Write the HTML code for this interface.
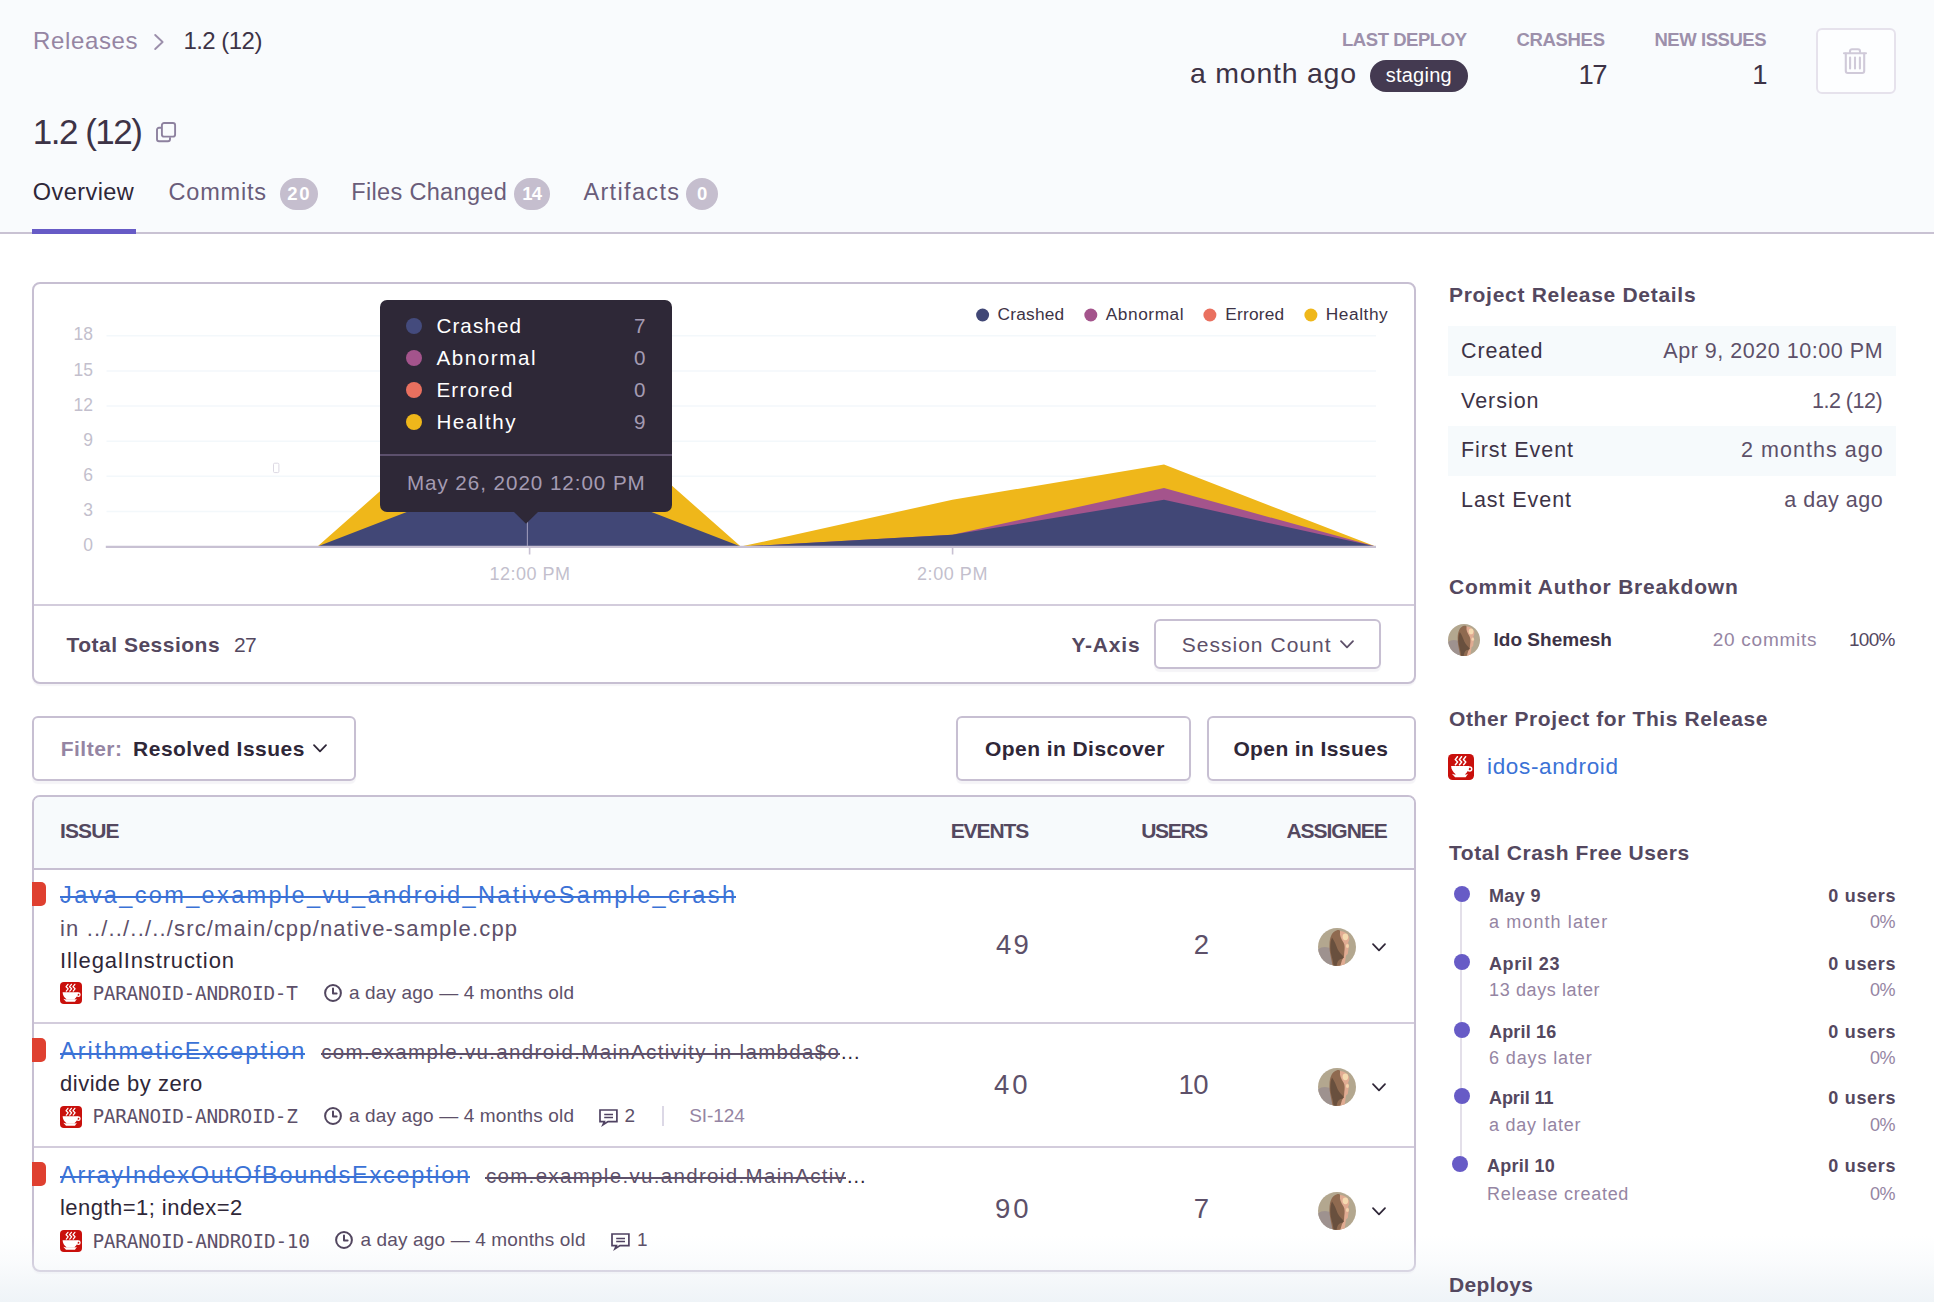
<!DOCTYPE html>
<html lang="en">
<head>
<meta charset="utf-8">
<title>Release 1.2 (12) - Sentry</title>
<style>
html,body{margin:0;padding:0;}
body{width:1934px;height:1302px;position:relative;overflow:hidden;background:#fff;font-family:"Liberation Sans",sans-serif;}
.a{position:absolute;box-sizing:border-box;}
.t{position:absolute;white-space:pre;line-height:1;z-index:5;}
.panel{border:2px solid #c7bfd2;border-radius:8px;background:#fff;box-shadow:0 2px 1px rgba(60,40,90,.05);}
.btn{border:2px solid #c7bfd2;border-radius:6px;background:#fff;box-shadow:0 3px 1px rgba(60,40,90,.05);}
.hl{background:#c7bfd2;height:2px;}
.badge{background:#c5bece;border-radius:16px;height:31.5px;top:178.2px;}
.dot{border-radius:50%;}
.stripe{background:#f6fafc;left:1448px;width:448px;height:50px;}
.tl{width:16px;height:16px;border-radius:50%;background:#675bc6;}
svg{position:absolute;overflow:visible;z-index:2;}
.st{position:absolute;height:2px;z-index:5;}
</style>
</head>
<body>
<!-- header -->
<div class="a" style="left:0;top:0;width:1934px;height:232px;background:#f9fbfd;"></div>
<div class="a" style="left:0;top:232px;width:1934px;height:2px;background:#c9c2d3;"></div>
<div class="a" style="left:32px;top:228.5px;width:104px;height:5.5px;background:#675bc6;"></div>
<svg style="left:154px;top:34px" width="10" height="16" viewBox="0 0 10 16"><path d="M1.2 1 L8.6 8 L1.2 15" fill="none" stroke="#9c8fab" stroke-width="1.9" stroke-linecap="round" stroke-linejoin="round"/></svg>
<div class="a" style="left:1369.8px;top:60.3px;width:98.3px;height:31.6px;border-radius:16px;background:#443a51;"></div>
<div class="a" style="left:1816.3px;top:28px;width:79.6px;height:65.8px;border:2px solid #e6e2ec;border-radius:6px;background:#fdfeff;"></div>
<svg style="left:1843px;top:48px" width="24" height="26" viewBox="0 0 24 26"><g fill="none" stroke="#d0cad9" stroke-width="2.1" stroke-linecap="round" stroke-linejoin="round"><path d="M7 5 V3.2 A2 2 0 0 1 9 1.2 H15 A2 2 0 0 1 17 3.2 V5"/><path d="M1 5.2 H23"/><path d="M2.8 5.5 V23 A2 2 0 0 0 4.8 25 H19.2 A2 2 0 0 0 21.2 23 V5.5"/><path d="M7.1 9.5 V20.5 M12 9.5 V20.5 M16.9 9.5 V20.5"/></g></svg>
<svg style="left:156px;top:121.8px" width="21" height="21" viewBox="0 0 21 21"><g fill="none" stroke="#8d819f" stroke-width="1.9" stroke-linejoin="round"><path d="M5.3 5.8 H3 A2 2 0 0 0 1 7.8 V17.2 A2 2 0 0 0 3 19.2 H12 A2 2 0 0 0 14 17.2 V15.2"/><rect x="5.9" y="1" width="13.2" height="13.6" rx="2.2"/></g></svg>
<div class="a badge" style="left:280.2px;width:37.6px;"></div>
<div class="a badge" style="left:514px;width:36px;"></div>
<div class="a badge" style="left:685.7px;width:32.3px;"></div>

<!-- chart panel -->
<div class="a panel" style="left:32px;top:282px;width:1384px;height:402px;"></div>
<div class="a hl" style="left:34px;top:604px;width:1380px;background:#d3ccdc;"></div>
<svg style="left:34px;top:284px" width="1380" height="320" viewBox="34 284 1380 320">
<g stroke="#f3f8fb" stroke-width="1.5">
<path d="M106.5 335.8H1376M106.5 370.9H1376M106.5 406H1376M106.5 441.2H1376M106.5 476.3H1376M106.5 511.4H1376"/>
</g>
<rect x="273.5" y="463.2" width="5.4" height="9.4" rx="1.2" fill="none" stroke="#dcd8e3" stroke-width="1"/>
<polygon fill="#efb71a" points="317.45,546.6 529.1,359.2 740.75,546.6 952.4,499.7 1164,464.6 1375.7,546.6"/>
<polygon fill="#a4548c" points="740.75,546.6 952.4,534.8 1164,488 1375.7,546.6"/>
<polygon fill="#414776" points="317.45,546.6 529.1,464.6 740.75,546.6 952.4,534.8 1164,499.7 1375.7,546.6"/>
<path d="M105.8 546.9H1376" stroke="#c8c1d3" stroke-width="2.2"/>
<path d="M529.6 548V554.5M952.6 548V554.5" stroke="#c8c1d3" stroke-width="1.6"/>
<path d="M527.4 520V546" stroke="#9a98b8" stroke-width="1.1"/>
<g>
<circle cx="982.6" cy="315" r="6.5" fill="#414776"/>
<circle cx="1090.8" cy="315" r="6.5" fill="#a4548c"/>
<circle cx="1209.9" cy="315" r="6.5" fill="#e9705f"/>
<circle cx="1310.9" cy="315" r="6.5" fill="#efb71a"/>
</g>
</svg>
<!-- tooltip -->
<div class="a" style="left:380px;top:300px;width:291.7px;height:212px;border-radius:7px;background:#2e2837;z-index:3;"></div>
<div class="a" style="left:380px;top:454px;width:291.7px;height:2px;background:#5c506c;z-index:4;"></div>
<svg style="left:514px;top:511.5px;z-index:4" width="24" height="12" viewBox="0 0 24 12"><path d="M0 0H24L12 11.8Z" fill="#2e2837"/></svg>
<div class="a dot" style="left:405.9px;top:318.3px;width:16px;height:16px;background:#444b7d;z-index:4;"></div>
<div class="a dot" style="left:405.9px;top:350.2px;width:16px;height:16px;background:#a4548c;z-index:4;"></div>
<div class="a dot" style="left:405.9px;top:382.3px;width:16px;height:16px;background:#e9705f;z-index:4;"></div>
<div class="a dot" style="left:405.9px;top:414.3px;width:16px;height:16px;background:#efb71a;z-index:4;"></div>
<!-- chart footer -->
<div class="a btn" style="left:1154.4px;top:618.5px;width:227px;height:50.8px;"></div>
<svg style="left:1339.5px;top:640px" width="14" height="9" viewBox="0 0 14 9"><path d="M1 1.2 L7 7.4 L13 1.2" fill="none" stroke="#5d5069" stroke-width="1.8" stroke-linecap="round" stroke-linejoin="round"/></svg>

<!-- filter row -->
<div class="a btn" style="left:32.4px;top:716.2px;width:323.2px;height:64.6px;"></div>
<svg style="left:313.3px;top:743.6px" width="14" height="9" viewBox="0 0 14 9"><path d="M1 1.2 L7 7.4 L13 1.2" fill="none" stroke="#2f2738" stroke-width="1.8" stroke-linecap="round" stroke-linejoin="round"/></svg>
<div class="a btn" style="left:956.3px;top:716.4px;width:234.9px;height:64.4px;"></div>
<div class="a btn" style="left:1206.5px;top:716.4px;width:209px;height:64.4px;"></div>

<!-- table -->
<div class="a panel" style="left:32px;top:794.5px;width:1384px;height:477.5px;overflow:hidden;"><div class="a" style="left:0;top:0;width:1380px;height:72px;background:#f7fafc;"></div></div>
<div class="a hl" style="left:34px;top:868px;width:1380px;"></div>
<div class="a hl" style="left:34px;top:1022px;width:1380px;background:#d3ccdc;"></div>
<div class="a hl" style="left:34px;top:1146px;width:1380px;background:#d3ccdc;"></div>
<div class="a" style="left:32px;top:882.1px;width:14px;height:23.8px;border-radius:0 5px 5px 0;background:#df4030;"></div>
<div class="a" style="left:32px;top:1038.1px;width:14px;height:23.8px;border-radius:0 5px 5px 0;background:#df4030;"></div>
<div class="a" style="left:32px;top:1162.2px;width:14px;height:23.8px;border-radius:0 5px 5px 0;background:#df4030;"></div>
<svg style="left:60px;top:982.2px" width="22" height="22" viewBox="0 0 26 26"><rect width="26" height="26" rx="4.6" fill="#c9100c"/><g fill="none" stroke="#fff" stroke-width="1.45" stroke-linejoin="round" stroke-linecap="round"><path d="M9.4 2.7L7.2 5.6L9.6 8L7.4 10.7M13.5 2.7L11.3 5.6L13.7 8L11.5 10.7M17.6 2.7L15.4 5.6L17.8 8L15.6 10.7"/><circle cx="21.7" cy="15" r="2" stroke-width="1.5"/></g><path d="M3.1 12.1H21.2C21.2 15.6 19.4 18.2 17.4 20V20.9H7.4V20C5.2 18.2 3.1 15.6 3.1 12.1Z" fill="#fff"/><path d="M3.9 19.8L7.2 20.7H17.8L20 19.8L17.7 23.2H7.1Z" fill="#fff"/></svg>
<svg style="left:323.7px;top:984px" width="18" height="18" viewBox="0 0 18 18"><g fill="none" stroke="#52465f" stroke-width="2" stroke-linecap="round" stroke-linejoin="round"><circle cx="9" cy="9" r="7.9"/><path d="M9 4.6V9.6H12.6"/></g></svg>
<svg style="left:60px;top:1105.9px" width="22" height="22" viewBox="0 0 26 26"><rect width="26" height="26" rx="4.6" fill="#c9100c"/><g fill="none" stroke="#fff" stroke-width="1.45" stroke-linejoin="round" stroke-linecap="round"><path d="M9.4 2.7L7.2 5.6L9.6 8L7.4 10.7M13.5 2.7L11.3 5.6L13.7 8L11.5 10.7M17.6 2.7L15.4 5.6L17.8 8L15.6 10.7"/><circle cx="21.7" cy="15" r="2" stroke-width="1.5"/></g><path d="M3.1 12.1H21.2C21.2 15.6 19.4 18.2 17.4 20V20.9H7.4V20C5.2 18.2 3.1 15.6 3.1 12.1Z" fill="#fff"/><path d="M3.9 19.8L7.2 20.7H17.8L20 19.8L17.7 23.2H7.1Z" fill="#fff"/></svg>
<svg style="left:323.7px;top:1107.2px" width="18" height="18" viewBox="0 0 18 18"><g fill="none" stroke="#52465f" stroke-width="2" stroke-linecap="round" stroke-linejoin="round"><circle cx="9" cy="9" r="7.9"/><path d="M9 4.6V9.6H12.6"/></g></svg>
<svg style="left:599.2px;top:1109.2px" width="19" height="17" viewBox="0 0 19 17"><g fill="none" stroke="#4f4262" stroke-width="1.7" stroke-linejoin="miter"><path d="M1 1H17.9V12.6H9L4 15.8L5.4 12.6H1Z"/><path d="M5.2 5.6H14M5.2 8.6H14" stroke-width="1.5"/></g></svg>
<div class="a" style="left:662px;top:1106px;width:2px;height:20px;background:#dcd8e6;"></div>
<svg style="left:60px;top:1230.1px" width="22" height="22" viewBox="0 0 26 26"><rect width="26" height="26" rx="4.6" fill="#c9100c"/><g fill="none" stroke="#fff" stroke-width="1.45" stroke-linejoin="round" stroke-linecap="round"><path d="M9.4 2.7L7.2 5.6L9.6 8L7.4 10.7M13.5 2.7L11.3 5.6L13.7 8L11.5 10.7M17.6 2.7L15.4 5.6L17.8 8L15.6 10.7"/><circle cx="21.7" cy="15" r="2" stroke-width="1.5"/></g><path d="M3.1 12.1H21.2C21.2 15.6 19.4 18.2 17.4 20V20.9H7.4V20C5.2 18.2 3.1 15.6 3.1 12.1Z" fill="#fff"/><path d="M3.9 19.8L7.2 20.7H17.8L20 19.8L17.7 23.2H7.1Z" fill="#fff"/></svg>
<svg style="left:335.4px;top:1231.3px" width="18" height="18" viewBox="0 0 18 18"><g fill="none" stroke="#52465f" stroke-width="2" stroke-linecap="round" stroke-linejoin="round"><circle cx="9" cy="9" r="7.9"/><path d="M9 4.6V9.6H12.6"/></g></svg>
<svg style="left:610.8px;top:1233.3px" width="19" height="17" viewBox="0 0 19 17"><g fill="none" stroke="#4f4262" stroke-width="1.7" stroke-linejoin="miter"><path d="M1 1H17.9V12.6H9L4 15.8L5.4 12.6H1Z"/><path d="M5.2 5.6H14M5.2 8.6H14" stroke-width="1.5"/></g></svg>
<svg style="left:1318px;top:928px" width="38" height="38" viewBox="0 0 38 38"><defs><clipPath id="av1"><circle cx="19" cy="19" r="19"/></clipPath></defs><g clip-path="url(#av1)"><rect width="38" height="38" fill="#b3a78f"/><ellipse cx="7" cy="29" rx="11" ry="10" fill="#96898f" opacity=".7"/><path d="M21 3C25 2.4 29 4.5 31 8.5C32 11.5 30.5 13.5 30 15C31.2 16.5 31.5 18.5 30.5 20.5L29.8 26L28 27.5L26.5 38H20Z" fill="#e0ab92"/><path d="M19 2.2C21 1.8 22.6 2.4 22 4C21.4 7 23 11 25.5 14.5C27 17 26.8 21 26.3 24C26 27 26.5 29.5 24 32L22.3 38H14.5C13.5 30 11 24 11.5 16C11.8 9 14 3.5 19 2.2Z" fill="#8f6a50"/><path d="M14 9.5C16.5 13 18 17 19.5 21C21 24.5 24.5 27 26 29.5L23.5 31C21 31 19.5 33 18.5 38H15.5C15.5 32 12.5 27 12.3 20C12.2 15 13 12 14 9.5Z" fill="#634b3b" opacity=".85"/><ellipse cx="27.4" cy="8.8" rx="2.8" ry="3.4" fill="#f5dab0"/><ellipse cx="29.4" cy="18" rx="1.5" ry="1.9" fill="#f3d3ad"/></g></svg>
<svg style="left:1372px;top:942.8px" width="14" height="9" viewBox="0 0 14 9"><path d="M1 1.2L7 7.4L13 1.2" fill="none" stroke="#2f2738" stroke-width="1.75" stroke-linecap="round" stroke-linejoin="round"/></svg>
<svg style="left:1318px;top:1068px" width="38" height="38" viewBox="0 0 38 38"><defs><clipPath id="av2"><circle cx="19" cy="19" r="19"/></clipPath></defs><g clip-path="url(#av2)"><rect width="38" height="38" fill="#b3a78f"/><ellipse cx="7" cy="29" rx="11" ry="10" fill="#96898f" opacity=".7"/><path d="M21 3C25 2.4 29 4.5 31 8.5C32 11.5 30.5 13.5 30 15C31.2 16.5 31.5 18.5 30.5 20.5L29.8 26L28 27.5L26.5 38H20Z" fill="#e0ab92"/><path d="M19 2.2C21 1.8 22.6 2.4 22 4C21.4 7 23 11 25.5 14.5C27 17 26.8 21 26.3 24C26 27 26.5 29.5 24 32L22.3 38H14.5C13.5 30 11 24 11.5 16C11.8 9 14 3.5 19 2.2Z" fill="#8f6a50"/><path d="M14 9.5C16.5 13 18 17 19.5 21C21 24.5 24.5 27 26 29.5L23.5 31C21 31 19.5 33 18.5 38H15.5C15.5 32 12.5 27 12.3 20C12.2 15 13 12 14 9.5Z" fill="#634b3b" opacity=".85"/><ellipse cx="27.4" cy="8.8" rx="2.8" ry="3.4" fill="#f5dab0"/><ellipse cx="29.4" cy="18" rx="1.5" ry="1.9" fill="#f3d3ad"/></g></svg>
<svg style="left:1372px;top:1082.8px" width="14" height="9" viewBox="0 0 14 9"><path d="M1 1.2L7 7.4L13 1.2" fill="none" stroke="#2f2738" stroke-width="1.75" stroke-linecap="round" stroke-linejoin="round"/></svg>
<svg style="left:1318px;top:1192px" width="38" height="38" viewBox="0 0 38 38"><defs><clipPath id="av3"><circle cx="19" cy="19" r="19"/></clipPath></defs><g clip-path="url(#av3)"><rect width="38" height="38" fill="#b3a78f"/><ellipse cx="7" cy="29" rx="11" ry="10" fill="#96898f" opacity=".7"/><path d="M21 3C25 2.4 29 4.5 31 8.5C32 11.5 30.5 13.5 30 15C31.2 16.5 31.5 18.5 30.5 20.5L29.8 26L28 27.5L26.5 38H20Z" fill="#e0ab92"/><path d="M19 2.2C21 1.8 22.6 2.4 22 4C21.4 7 23 11 25.5 14.5C27 17 26.8 21 26.3 24C26 27 26.5 29.5 24 32L22.3 38H14.5C13.5 30 11 24 11.5 16C11.8 9 14 3.5 19 2.2Z" fill="#8f6a50"/><path d="M14 9.5C16.5 13 18 17 19.5 21C21 24.5 24.5 27 26 29.5L23.5 31C21 31 19.5 33 18.5 38H15.5C15.5 32 12.5 27 12.3 20C12.2 15 13 12 14 9.5Z" fill="#634b3b" opacity=".85"/><ellipse cx="27.4" cy="8.8" rx="2.8" ry="3.4" fill="#f5dab0"/><ellipse cx="29.4" cy="18" rx="1.5" ry="1.9" fill="#f3d3ad"/></g></svg>
<svg style="left:1372px;top:1206.8px" width="14" height="9" viewBox="0 0 14 9"><path d="M1 1.2L7 7.4L13 1.2" fill="none" stroke="#2f2738" stroke-width="1.75" stroke-linecap="round" stroke-linejoin="round"/></svg>
<svg style="left:1448px;top:624px" width="32" height="32" viewBox="0 0 38 38"><defs><clipPath id="av4"><circle cx="19" cy="19" r="19"/></clipPath></defs><g clip-path="url(#av4)"><rect width="38" height="38" fill="#b3a78f"/><ellipse cx="7" cy="29" rx="11" ry="10" fill="#96898f" opacity=".7"/><path d="M21 3C25 2.4 29 4.5 31 8.5C32 11.5 30.5 13.5 30 15C31.2 16.5 31.5 18.5 30.5 20.5L29.8 26L28 27.5L26.5 38H20Z" fill="#e0ab92"/><path d="M19 2.2C21 1.8 22.6 2.4 22 4C21.4 7 23 11 25.5 14.5C27 17 26.8 21 26.3 24C26 27 26.5 29.5 24 32L22.3 38H14.5C13.5 30 11 24 11.5 16C11.8 9 14 3.5 19 2.2Z" fill="#8f6a50"/><path d="M14 9.5C16.5 13 18 17 19.5 21C21 24.5 24.5 27 26 29.5L23.5 31C21 31 19.5 33 18.5 38H15.5C15.5 32 12.5 27 12.3 20C12.2 15 13 12 14 9.5Z" fill="#634b3b" opacity=".85"/><ellipse cx="27.4" cy="8.8" rx="2.8" ry="3.4" fill="#f5dab0"/><ellipse cx="29.4" cy="18" rx="1.5" ry="1.9" fill="#f3d3ad"/></g></svg>
<svg style="left:1448.2px;top:754px" width="26" height="26" viewBox="0 0 26 26"><rect width="26" height="26" rx="4.6" fill="#c9100c"/><g fill="none" stroke="#fff" stroke-width="1.45" stroke-linejoin="round" stroke-linecap="round"><path d="M9.4 2.7L7.2 5.6L9.6 8L7.4 10.7M13.5 2.7L11.3 5.6L13.7 8L11.5 10.7M17.6 2.7L15.4 5.6L17.8 8L15.6 10.7"/><circle cx="21.7" cy="15" r="2" stroke-width="1.5"/></g><path d="M3.1 12.1H21.2C21.2 15.6 19.4 18.2 17.4 20V20.9H7.4V20C5.2 18.2 3.1 15.6 3.1 12.1Z" fill="#fff"/><path d="M3.9 19.8L7.2 20.7H17.8L20 19.8L17.7 23.2H7.1Z" fill="#fff"/></svg>

<!-- sidebar -->
<div class="a stripe" style="top:326px;"></div>
<div class="a stripe" style="top:426px;"></div>
<div class="a" style="left:1460.2px;top:894px;width:2px;height:262px;background:#e3dfe9;"></div>
<div class="a tl" style="left:1454.2px;top:886.1px;"></div>
<div class="a tl" style="left:1454.2px;top:954.1px;"></div>
<div class="a tl" style="left:1454.2px;top:1022.4px;"></div>
<div class="a tl" style="left:1453.9px;top:1088.2px;"></div>
<div class="a tl" style="left:1451.9px;top:1156.2px;"></div>

<!-- bottom fade -->
<div class="a" style="left:0;top:1236px;width:1934px;height:66px;background:linear-gradient(to bottom,rgba(238,243,247,0) 0%,rgba(238,243,247,.3) 40%,rgba(238,243,247,.75) 80%,rgba(238,243,247,.95) 100%);z-index:1;"></div>

<span class="t" style='left:33.00px;top:29.30px;font-size:24px;color:#9585a3;letter-spacing:0.634px;'>Releases</span>
<span class="t" style='left:183.40px;top:29.30px;font-size:24px;color:#3d3346;letter-spacing:-0.531px;'>1.2 (12)</span>
<span class="t" style='left:1342.00px;top:31.20px;font-size:18.5px;color:#9d90ab;font-weight:700;letter-spacing:-0.452px;'>LAST DEPLOY</span>
<span class="t" style='left:1190.00px;top:59.40px;font-size:28.5px;color:#3d3346;letter-spacing:0.755px;'>a month ago</span>
<span class="t" style='left:1385.70px;top:65.40px;font-size:20px;color:#ffffff;letter-spacing:0.250px;'>staging</span>
<span class="t" style='left:1516.40px;top:31.20px;font-size:18.5px;color:#9d90ab;font-weight:700;letter-spacing:-0.311px;'>CRASHES</span>
<span class="t" style='left:1578.50px;top:61.00px;font-size:27.5px;color:#3d3346;letter-spacing:-1.500px;'>17</span>
<span class="t" style='left:1654.40px;top:31.20px;font-size:18.5px;color:#9d90ab;font-weight:700;letter-spacing:-0.441px;'>NEW ISSUES</span>
<span class="t" style='left:1752.30px;top:61.00px;font-size:27.5px;color:#3d3346;'>1</span>
<span class="t" style='left:32.80px;top:113.80px;font-size:35px;color:#3d3346;letter-spacing:-1.500px;'>1.2 (12)</span>
<span class="t" style='left:32.80px;top:180.50px;font-size:23.5px;color:#2f2738;letter-spacing:0.438px;'>Overview</span>
<span class="t" style='left:168.50px;top:180.50px;font-size:23.5px;color:#6a5d7a;letter-spacing:0.816px;'>Commits</span>
<span class="t" style='left:351.30px;top:180.50px;font-size:23.5px;color:#6a5d7a;letter-spacing:0.329px;'>Files Changed</span>
<span class="t" style='left:583.40px;top:180.50px;font-size:23.5px;color:#6a5d7a;letter-spacing:1.351px;'>Artifacts</span>
<span class="t" style='left:287.20px;top:184.70px;font-size:18.5px;color:#ffffff;font-weight:700;letter-spacing:1.822px;'>20</span>
<span class="t" style='left:522.30px;top:184.70px;font-size:18.5px;color:#ffffff;font-weight:700;letter-spacing:-0.878px;'>14</span>
<span class="t" style='left:697.10px;top:184.70px;font-size:18.5px;color:#ffffff;font-weight:700;'>0</span>
<span class="t" style='left:73.53px;top:326.40px;font-size:17.5px;color:#c3bfcd;'>18</span>
<span class="t" style='left:73.53px;top:361.50px;font-size:17.5px;color:#c3bfcd;'>15</span>
<span class="t" style='left:73.53px;top:396.60px;font-size:17.5px;color:#c3bfcd;'>12</span>
<span class="t" style='left:83.27px;top:431.80px;font-size:17.5px;color:#c3bfcd;'>9</span>
<span class="t" style='left:83.27px;top:466.90px;font-size:17.5px;color:#c3bfcd;'>6</span>
<span class="t" style='left:83.27px;top:502.00px;font-size:17.5px;color:#c3bfcd;'>3</span>
<span class="t" style='left:83.27px;top:537.10px;font-size:17.5px;color:#c3bfcd;'>0</span>
<span class="t" style='left:489.50px;top:565.00px;font-size:18px;color:#c3bfcd;letter-spacing:0.493px;'>12:00 PM</span>
<span class="t" style='left:917.00px;top:565.00px;font-size:18px;color:#c3bfcd;letter-spacing:0.559px;'>2:00 PM</span>
<span class="t" style='left:997.60px;top:306.20px;font-size:17.3px;color:#3d3346;letter-spacing:0.212px;'>Crashed</span>
<span class="t" style='left:1105.80px;top:306.20px;font-size:17.3px;color:#3d3346;letter-spacing:0.547px;'>Abnormal</span>
<span class="t" style='left:1225.20px;top:306.20px;font-size:17.3px;color:#3d3346;letter-spacing:0.229px;'>Errored</span>
<span class="t" style='left:1325.80px;top:306.20px;font-size:17.3px;color:#3d3346;letter-spacing:0.548px;'>Healthy</span>
<span class="t" style='left:436.40px;top:316.10px;font-size:20.6px;color:#ffffff;letter-spacing:1.126px;'>Crashed</span>
<span class="t" style='left:634.03px;top:316.10px;font-size:20.6px;color:#a49bb2;'>7</span>
<span class="t" style='left:436.40px;top:348.30px;font-size:20.6px;color:#ffffff;letter-spacing:1.566px;'>Abnormal</span>
<span class="t" style='left:634.03px;top:348.30px;font-size:20.6px;color:#a49bb2;'>0</span>
<span class="t" style='left:436.40px;top:380.40px;font-size:20.6px;color:#ffffff;letter-spacing:1.238px;'>Errored</span>
<span class="t" style='left:634.03px;top:380.40px;font-size:20.6px;color:#a49bb2;'>0</span>
<span class="t" style='left:436.40px;top:412.40px;font-size:20.6px;color:#ffffff;letter-spacing:1.545px;'>Healthy</span>
<span class="t" style='left:634.03px;top:412.40px;font-size:20.6px;color:#a49bb2;'>9</span>
<span class="t" style='left:406.90px;top:472.50px;font-size:20.6px;color:#a49bb2;letter-spacing:0.961px;'>May 26, 2020 12:00 PM</span>
<span class="t" style='left:66.50px;top:633.60px;font-size:21px;color:#54485f;font-weight:700;letter-spacing:0.496px;'>Total Sessions</span>
<span class="t" style='left:234.00px;top:633.60px;font-size:21px;color:#54485f;letter-spacing:-0.559px;'>27</span>
<span class="t" style='left:1071.40px;top:633.60px;font-size:21px;color:#54485f;font-weight:700;letter-spacing:0.819px;'>Y-Axis</span>
<span class="t" style='left:1181.70px;top:633.60px;font-size:21px;color:#5d5069;letter-spacing:1.026px;'>Session Count</span>
<span class="t" style='left:60.70px;top:737.90px;font-size:21px;color:#9585a3;font-weight:700;letter-spacing:0.493px;'>Filter:</span>
<span class="t" style='left:133.10px;top:737.90px;font-size:21px;color:#2f2738;font-weight:700;letter-spacing:0.479px;'>Resolved Issues</span>
<span class="t" style='left:985.00px;top:737.90px;font-size:21px;color:#2f2738;font-weight:700;letter-spacing:0.439px;'>Open in Discover</span>
<span class="t" style='left:1233.40px;top:737.90px;font-size:21px;color:#2f2738;font-weight:700;letter-spacing:0.393px;'>Open in Issues</span>
<span class="t" style='left:60.10px;top:820.20px;font-size:21px;color:#54485f;font-weight:700;letter-spacing:-0.908px;'>ISSUE</span>
<span class="t" style='left:950.70px;top:820.20px;font-size:21px;color:#54485f;font-weight:700;letter-spacing:-1.086px;'>EVENTS</span>
<span class="t" style='left:1141.20px;top:820.20px;font-size:21px;color:#54485f;font-weight:700;letter-spacing:-1.315px;'>USERS</span>
<span class="t" style='left:1286.40px;top:820.20px;font-size:21px;color:#54485f;font-weight:700;letter-spacing:-1.019px;'>ASSIGNEE</span>
<span class="t" style='left:60.10px;top:883.80px;font-size:23.5px;color:#3b72d6;letter-spacing:2.370px;'>Java_com_example_vu_android_NativeSample_crash</span>
<div class="st" style="left:59.60px;top:896.10px;width:676.40px;background:#3b72d6"></div>
<span class="t" style='left:60.00px;top:917.90px;font-size:22px;color:#5d5069;letter-spacing:1.161px;'>in ../../../../src/main/cpp/native-sample.cpp</span>
<span class="t" style='left:60.00px;top:950.20px;font-size:22px;color:#2f2738;letter-spacing:0.883px;'>IllegalInstruction</span>
<span class="t" style='left:92.40px;top:983.80px;font-size:19.4px;color:#5d5069;font-family:"DejaVu Sans Mono", "Liberation Mono", monospace;letter-spacing:-0.273px;'>PARANOID-ANDROID-T</span>
<span class="t" style='left:349.00px;top:982.50px;font-size:19px;color:#5d5069;letter-spacing:0.139px;'>a day ago — 4 months old</span>
<span class="t" style='left:995.90px;top:931.00px;font-size:27.5px;color:#5d5069;letter-spacing:2.306px;'>49</span>
<span class="t" style='left:1193.70px;top:931.00px;font-size:27.5px;color:#5d5069;'>2</span>
<span class="t" style='left:60.00px;top:1040.30px;font-size:23.5px;color:#3b72d6;letter-spacing:2.040px;'>ArithmeticException</span>
<div class="st" style="left:59.50px;top:1052.60px;width:245.90px;background:#3b72d6"></div>
<span class="t" style='left:321.20px;top:1042.30px;font-size:20.5px;color:#5d5069;letter-spacing:1.348px;'>com.example.vu.android.MainActivity in lambda$o</span>
<div class="st" style="left:320.70px;top:1053.46px;width:519.30px;background:#5d5069"></div>
<span class="t" style='left:840.00px;top:1042.30px;font-size:20.5px;color:#2f2738;'>…</span>
<span class="t" style='left:60.00px;top:1073.10px;font-size:22px;color:#2f2738;letter-spacing:0.504px;'>divide by zero</span>
<span class="t" style='left:92.40px;top:1107.40px;font-size:19.4px;color:#5d5069;font-family:"DejaVu Sans Mono", "Liberation Mono", monospace;letter-spacing:-0.273px;'>PARANOID-ANDROID-Z</span>
<span class="t" style='left:349.00px;top:1105.60px;font-size:19px;color:#5d5069;letter-spacing:0.139px;'>a day ago — 4 months old</span>
<span class="t" style='left:624.60px;top:1105.60px;font-size:19px;color:#5d5069;'>2</span>
<span class="t" style='left:689.20px;top:1105.60px;font-size:19px;color:#9585a3;letter-spacing:-0.077px;'>SI-124</span>
<span class="t" style='left:994.00px;top:1071.00px;font-size:27.5px;color:#5d5069;letter-spacing:3.000px;'>40</span>
<span class="t" style='left:1178.50px;top:1071.00px;font-size:27.5px;color:#5d5069;letter-spacing:-0.594px;'>10</span>
<span class="t" style='left:60.00px;top:1163.90px;font-size:23.5px;color:#3b72d6;letter-spacing:1.716px;'>ArrayIndexOutOfBoundsException</span>
<div class="st" style="left:59.50px;top:1176.20px;width:410.50px;background:#3b72d6"></div>
<span class="t" style='left:485.90px;top:1165.90px;font-size:20.5px;color:#5d5069;letter-spacing:1.329px;'>com.example.vu.android.MainActiv</span>
<div class="st" style="left:485.40px;top:1177.06px;width:360.60px;background:#5d5069"></div>
<span class="t" style='left:846.00px;top:1165.90px;font-size:20.5px;color:#2f2738;'>…</span>
<span class="t" style='left:60.00px;top:1197.20px;font-size:22px;color:#2f2738;letter-spacing:0.460px;'>length=1; index=2</span>
<span class="t" style='left:92.40px;top:1231.50px;font-size:19.4px;color:#5d5069;font-family:"DejaVu Sans Mono", "Liberation Mono", monospace;letter-spacing:-0.234px;'>PARANOID-ANDROID-10</span>
<span class="t" style='left:360.50px;top:1229.70px;font-size:19px;color:#5d5069;letter-spacing:0.139px;'>a day ago — 4 months old</span>
<span class="t" style='left:637.00px;top:1229.70px;font-size:19px;color:#5d5069;'>1</span>
<span class="t" style='left:995.00px;top:1195.00px;font-size:27.5px;color:#5d5069;letter-spacing:3.000px;'>90</span>
<span class="t" style='left:1193.70px;top:1195.00px;font-size:27.5px;color:#5d5069;'>7</span>
<span class="t" style='left:1449.00px;top:283.50px;font-size:21px;color:#54485f;font-weight:700;letter-spacing:0.703px;'>Project Release Details</span>
<span class="t" style='left:1461.10px;top:340.90px;font-size:21.5px;color:#3d3346;letter-spacing:0.833px;'>Created</span>
<span class="t" style='left:1663.30px;top:340.90px;font-size:21.5px;color:#5d5069;letter-spacing:0.533px;'>Apr 9, 2020 10:00 PM</span>
<span class="t" style='left:1461.10px;top:390.80px;font-size:21.5px;color:#3d3346;letter-spacing:0.947px;'>Version</span>
<span class="t" style='left:1812.00px;top:390.80px;font-size:21.5px;color:#5d5069;letter-spacing:-0.501px;'>1.2 (12)</span>
<span class="t" style='left:1461.00px;top:440.40px;font-size:21.5px;color:#3d3346;letter-spacing:0.925px;'>First Event</span>
<span class="t" style='left:1741.00px;top:440.40px;font-size:21.5px;color:#5d5069;letter-spacing:1.029px;'>2 months ago</span>
<span class="t" style='left:1461.00px;top:490.30px;font-size:21.5px;color:#3d3346;letter-spacing:0.934px;'>Last Event</span>
<span class="t" style='left:1784.30px;top:490.30px;font-size:21.5px;color:#5d5069;letter-spacing:0.481px;'>a day ago</span>
<span class="t" style='left:1449.00px;top:576.00px;font-size:21px;color:#54485f;font-weight:700;letter-spacing:0.806px;'>Commit Author Breakdown</span>
<span class="t" style='left:1493.50px;top:630.20px;font-size:19px;color:#3d3346;font-weight:700;letter-spacing:0.015px;'>Ido Shemesh</span>
<span class="t" style='left:1712.70px;top:630.20px;font-size:19px;color:#9585a3;letter-spacing:0.751px;'>20 commits</span>
<span class="t" style='left:1849.00px;top:630.20px;font-size:19px;color:#54485f;letter-spacing:-0.703px;'>100%</span>
<span class="t" style='left:1449.00px;top:707.80px;font-size:21px;color:#54485f;font-weight:700;letter-spacing:0.600px;'>Other Project for This Release</span>
<span class="t" style='left:1487.00px;top:755.60px;font-size:22.5px;color:#3b72d6;letter-spacing:0.652px;'>idos-android</span>
<span class="t" style='left:1449.00px;top:841.70px;font-size:21px;color:#54485f;font-weight:700;letter-spacing:0.563px;'>Total Crash Free Users</span>
<span class="t" style='left:1489.00px;top:886.60px;font-size:18px;color:#54485f;font-weight:700;letter-spacing:0.367px;'>May 9</span>
<span class="t" style='left:1489.00px;top:913.20px;font-size:18px;color:#9585a3;letter-spacing:1.095px;'>a month later</span>
<span class="t" style='left:1828.30px;top:886.60px;font-size:18px;color:#54485f;font-weight:700;letter-spacing:0.692px;'>0 users</span>
<span class="t" style='left:1870.00px;top:913.20px;font-size:18px;color:#9585a3;letter-spacing:-0.516px;'>0%</span>
<span class="t" style='left:1489.00px;top:954.60px;font-size:18px;color:#54485f;font-weight:700;letter-spacing:0.624px;'>April 23</span>
<span class="t" style='left:1489.00px;top:980.50px;font-size:18px;color:#9585a3;letter-spacing:0.620px;'>13 days later</span>
<span class="t" style='left:1828.30px;top:954.60px;font-size:18px;color:#54485f;font-weight:700;letter-spacing:0.692px;'>0 users</span>
<span class="t" style='left:1870.00px;top:980.50px;font-size:18px;color:#9585a3;letter-spacing:-0.516px;'>0%</span>
<span class="t" style='left:1489.00px;top:1022.60px;font-size:18px;color:#54485f;font-weight:700;letter-spacing:0.181px;'>April 16</span>
<span class="t" style='left:1489.00px;top:1049.00px;font-size:18px;color:#9585a3;letter-spacing:0.876px;'>6 days later</span>
<span class="t" style='left:1828.30px;top:1022.60px;font-size:18px;color:#54485f;font-weight:700;letter-spacing:0.692px;'>0 users</span>
<span class="t" style='left:1870.00px;top:1049.00px;font-size:18px;color:#9585a3;letter-spacing:-0.516px;'>0%</span>
<span class="t" style='left:1489.00px;top:1089.00px;font-size:18px;color:#54485f;font-weight:700;letter-spacing:-0.090px;'>April 11</span>
<span class="t" style='left:1489.00px;top:1116.10px;font-size:18px;color:#9585a3;letter-spacing:0.754px;'>a day later</span>
<span class="t" style='left:1828.30px;top:1089.00px;font-size:18px;color:#54485f;font-weight:700;letter-spacing:0.692px;'>0 users</span>
<span class="t" style='left:1870.00px;top:1116.10px;font-size:18px;color:#9585a3;letter-spacing:-0.516px;'>0%</span>
<span class="t" style='left:1487.00px;top:1157.00px;font-size:18px;color:#54485f;font-weight:700;letter-spacing:0.238px;'>April 10</span>
<span class="t" style='left:1487.00px;top:1184.60px;font-size:18px;color:#9585a3;letter-spacing:0.736px;'>Release created</span>
<span class="t" style='left:1828.30px;top:1157.00px;font-size:18px;color:#54485f;font-weight:700;letter-spacing:0.692px;'>0 users</span>
<span class="t" style='left:1870.00px;top:1184.60px;font-size:18px;color:#9585a3;letter-spacing:-0.516px;'>0%</span>
<span class="t" style='left:1449.00px;top:1273.90px;font-size:21px;color:#54485f;font-weight:700;letter-spacing:0.383px;'>Deploys</span>
</body>
</html>
